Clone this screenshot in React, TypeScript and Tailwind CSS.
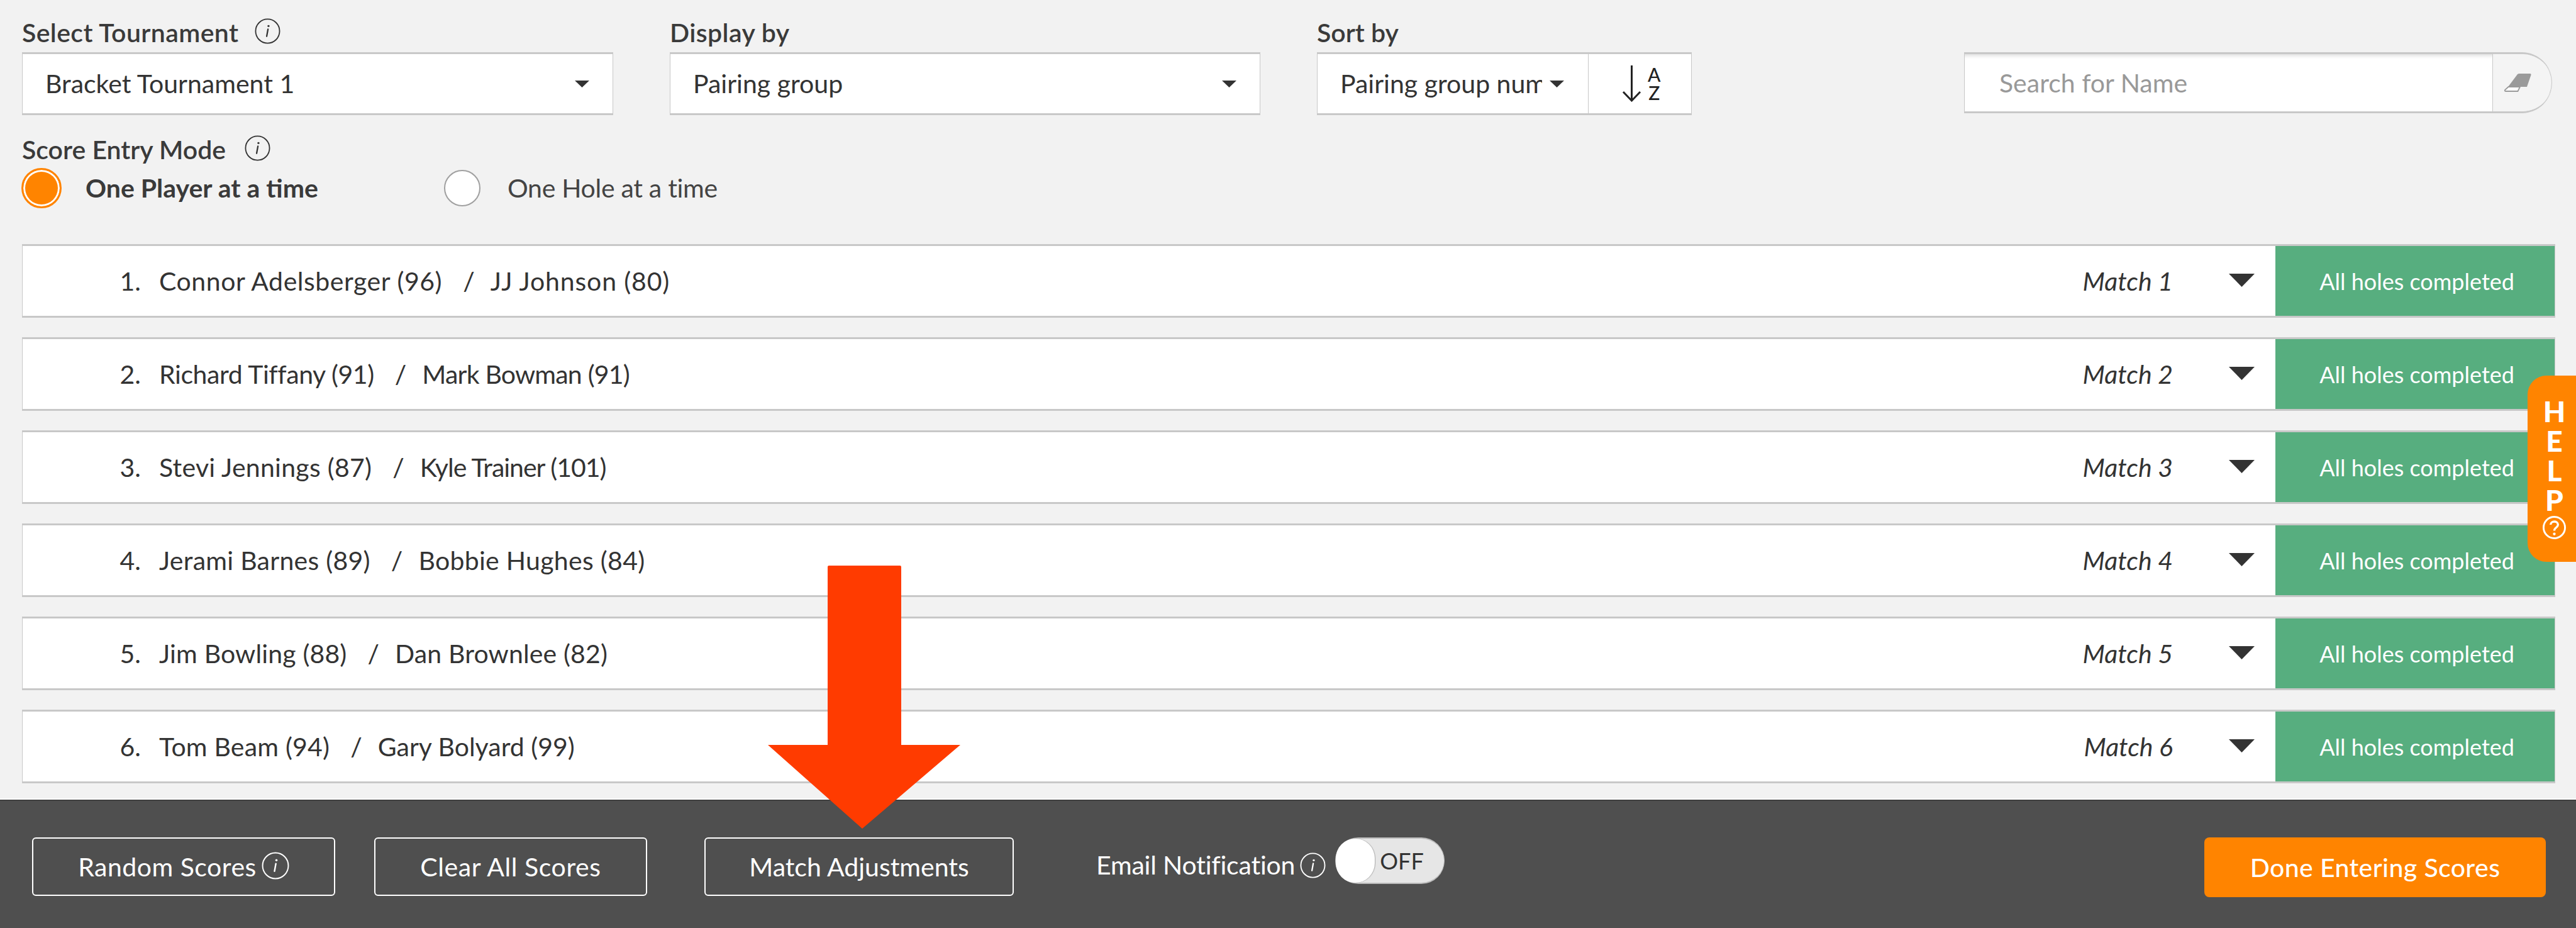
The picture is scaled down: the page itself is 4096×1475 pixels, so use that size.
import React from "react";

function Info({ className = "", color = "#333" }: { className?: string; color?: string }) {
  return (
    <svg viewBox="0 0 40 40" className={className} fill="none">
      <circle cx="20" cy="20" r="18.6" stroke={color} strokeWidth="1.8" />
      <path d="M20.6 17 L18.6 28" stroke={color} strokeWidth="2.2" strokeLinecap="round" />
      <circle cx="21.4" cy="12" r="1.6" fill={color} />
    </svg>
  );
}

function Caret({ className = "" }: { className?: string }) {
  return (
    <svg viewBox="0 0 40 20" preserveAspectRatio="none" className={className}>
      <path d="M0 0H40L20 20Z" fill="#333" />
    </svg>
  );
}

function Select({ label, info, text, w }: { label: string; info?: boolean; text: string; w: string }) {
  return (
    <div className={`flex flex-col ${w}`}>
      <div className="flex items-center h-[50px] mb-[6px] text-[41px] font-semibold tracking-[0.4px] text-[#3a3a3a]">
        <span>{label}</span>
        {info && <Info className="w-[41px] h-[41px] ml-[26px] -mt-[6px]" />}
      </div>
      <div className="flex items-center justify-between h-[100px] bg-white border border-[#c8c8c8] border-y-[3px] pl-[36px] pr-[37px] text-[41px] text-[#333]">
        <span>{text}</span>
        <Caret className="w-[23px] h-[11px]" />
      </div>
    </div>
  );
}

const rows = [
  { n: "1.", a: "Connor Adelsberger (96)", at: "tracking-[0.55px]", b: "JJ Johnson (80)", bt: "tracking-[0.85px]", m: "Match 1" },
  { n: "2.", a: "Richard Tiffany (91)", at: "tracking-[-0.4px]", b: "Mark Bowman (91)", bt: "tracking-[-0.8px]", m: "Match 2" },
  { n: "3.", a: "Stevi Jennings (87)", at: "tracking-[0.27px]", b: "Kyle Trainer (101)", bt: "tracking-[-1px]", m: "Match 3" },
  { n: "4.", a: "Jerami Barnes (89)", at: "tracking-[0.27px]", b: "Bobbie Hughes (84)", bt: "tracking-[0.3px]", m: "Match 4" },
  { n: "5.", a: "Jim Bowling (88)", at: "tracking-[0.15px]", b: "Dan Brownlee (82)", bt: "tracking-[0.15px]", m: "Match 5" },
  { n: "6.", a: "Tom Beam (94)", at: "tracking-[0.2px]", b: "Gary Bolyard (99)", bt: "tracking-[0px]", m: "Match 6" },
];

function Row({ r }: { r: (typeof rows)[number] }) {
  return (
    <div className="flex items-stretch h-[117px] bg-white border border-[#c8c8c8] border-y-[3px] text-[41px] text-[#333]">
      <span className="w-[188px] text-right self-center">{r.n}</span>
      <span className={`ml-[29px] self-center ${r.at}`}>{r.a}</span>
      <span className="ml-[33px] mr-[25px] self-center">/</span>
      <span className={`self-center ${r.bt}`}>{r.b}</span>
      <span className="ml-auto self-center italic">{r.m}</span>
      <div className="w-[163px] flex items-center justify-end pr-[33px]">
        <Caret className="w-[41px] h-[21px] -mt-[3px]" />
      </div>
      <div className="w-[444px] bg-[#57ae7f] flex items-center justify-center pl-[6px] text-[36px] text-white">
        All holes completed
      </div>
    </div>
  );
}

function FootBtn({ children, w, tracking = "" }: { children: React.ReactNode; w: string; tracking?: string }) {
  return (
    <div className={`flex items-center justify-center h-[93px] ${w} ${tracking} border-[2px] border-white rounded-[6px] text-[41px] text-white`}>
      {children}
    </div>
  );
}

export default function App() {
  return (
    <div className="relative w-[4096px] h-[1475px] overflow-hidden flex flex-col bg-[#f2f2f2] [font-family:Lato,'Open_Sans',sans-serif]">
      <div className="flex-1 pl-[35px] pr-[33px] pt-[27px]">
        <div className="flex items-start">
          <Select label="Select Tournament" info text="Bracket Tournament 1" w="w-[940px]" />
          <div className="ml-[90px]">
            <Select label="Display by" text="Pairing group" w="w-[939px]" />
          </div>
          <div className="ml-[90px] flex flex-col w-[596px]">
            <div className="flex items-center h-[50px] mb-[6px] text-[41px] font-semibold text-[#3a3a3a]">Sort by</div>
            <div className="flex h-[100px] bg-white border border-[#c8c8c8] border-y-[3px] text-[41px] text-[#333]">
              <div className="w-[431px] flex items-center pl-[36px] border-r border-[#c8c8c8]">
                <span className="w-[321px] overflow-hidden whitespace-nowrap">Pairing group number</span>
                <Caret className="ml-[12px] w-[23px] h-[11px]" />
              </div>
              <div className="flex-1 flex items-center pl-[52px]">
                <svg viewBox="0 0 33 58" className="w-[33px] h-[58px]" fill="none">
                  <path d="M16.5 0V56M3 42L16.5 56L30 42" stroke="#222" strokeWidth="3" />
                </svg>
                <div className="ml-[9px] flex flex-col items-center text-[30px] leading-[29px] font-medium text-[#222]">
                  <span>A</span>
                  <span>Z</span>
                </div>
              </div>
            </div>
          </div>
          <div className="ml-[433px] mt-[56px] flex w-[935px] h-[97px] bg-white border border-[#c8c8c8] border-y-[3px] border-r-0 rounded-r-[48px] overflow-hidden shadow-[inset_0_6px_6px_-4px_#d8d8d8]">
            <div className="w-[839px] flex items-center pl-[55px] text-[41px] text-[#999]">Search for Name</div>
            <div className="flex-1 flex items-center pl-[17px] bg-[#f4f4f4] border-l border-r border-[#c8c8c8] rounded-r-[48px]">
              <svg viewBox="0 0 44 29" className="w-[44px] h-[29px]">
                <path d="M22 1Q23 0 25 0H42Q44 0 43.5 2L37 21H7Z" fill="#9a9a9a" />
                <path d="M7.5 21H26L22.5 28H3.5Q1 28 2 26Z" fill="#fff" stroke="#9a9a9a" strokeWidth="1.8" />
              </svg>
            </div>
          </div>
        </div>

        <div className="mt-[30px] flex items-center h-[50px] text-[41px] font-semibold text-[#3a3a3a]">
          <span>Score Entry Mode</span>
          <Info className="w-[41px] h-[41px] ml-[30px] -mt-[6px]" />
        </div>
        <div className="mt-[3px] flex items-center h-[65px]">
          <div className="-ml-[1px] w-[64px] h-[64px] rounded-full bg-[#ff8400] border-[3px] border-[#ff8400] shadow-[inset_0_0_0_3px_white]" />
          <span className="ml-[38px] w-[373px] whitespace-nowrap text-[41px] font-bold text-[#3a3a3a]">One Player at a time</span>
          <div className="ml-[197px] w-[58px] h-[58px] rounded-full bg-white border-[2px] border-[#a0a0a0]" />
          <span className="ml-[43px] text-[41px] tracking-[-0.3px] text-[#444]">One Hole at a time</span>
        </div>

        <div className="mt-[57px] flex flex-col gap-[31px]">
          {rows.map((r) => (
            <Row key={r.n} r={r} />
          ))}
        </div>
      </div>

      <div className="h-[204px] shrink-0 bg-[#4f4f4f] border-t-[2px] border-[#3f3f3f] shadow-[0_-2px_0_0_white] pl-[51px] pr-[48px] pt-[58px] flex items-start">
        <FootBtn w="w-[482px]" tracking="tracking-[0.5px]">
          <span>Random Scores</span>
          <Info className="w-[44px] h-[44px] ml-[8px] -mt-[4px]" color="#fff" />
        </FootBtn>
        <div className="ml-[62px]">
          <FootBtn w="w-[434px]" tracking="tracking-[0.6px]">Clear All Scores</FootBtn>
        </div>
        <div className="ml-[91px]">
          <FootBtn w="w-[492px]">Match Adjustments</FootBtn>
        </div>
        <div className="ml-[131px] mt-[14px] flex items-center text-[41px] tracking-[-0.2px] text-white h-[60px]">
          <span>Email Notification</span>
          <Info className="w-[41px] h-[41px] ml-[8px]" color="#fff" />
        </div>
        <div className="ml-[15px] relative flex items-center w-[174px] h-[74px] rounded-full bg-[#e6e6e6] border border-[#bbb] border-y-[2px]">
          <div className="absolute left-0 top-0 bottom-0 w-[62px] rounded-full bg-white shadow-[1px_0_1px_#aaa]" />
          <span className="ml-[70px] text-[36px] text-[#333]">OFF</span>
        </div>
        <div className="ml-auto flex items-center justify-center w-[543px] h-[95px] rounded-[8px] bg-[#ff8400] text-[41px] font-medium tracking-[0.4px] text-white">
          Done Entering Scores
        </div>
      </div>

      <div className="absolute left-[4019px] top-[597px] w-[77px] h-[296px] bg-[#ff8400] rounded-l-[30px] flex flex-col items-center pl-[8px] pt-[33px] text-[46px] font-black leading-[47px] text-white">
        <span>H</span>
        <span>E</span>
        <span>L</span>
        <span>P</span>
        <svg viewBox="0 0 40 40" className="w-[39px] h-[39px] mt-[1px]" fill="none">
          <circle cx="20" cy="20" r="17.5" stroke="#fff" strokeWidth="3" />
          <path d="M14 15.5C14 8.5 26 8.5 26 15.5C26 20 20 20 20 25" stroke="#fff" strokeWidth="3.4" />
          <circle cx="20" cy="30.5" r="2.2" fill="#fff" />
        </svg>
      </div>

      <svg
        className="absolute left-[1221px] top-[899px] w-[306px] h-[418px]"
        viewBox="0 0 306 418"
      >
        <path d="M95 2Q95 0 97 0H210Q212 0 212 2V285H306L150 418L0 285H95Z" fill="#ff3b00" />
      </svg>
    </div>
  );
}
